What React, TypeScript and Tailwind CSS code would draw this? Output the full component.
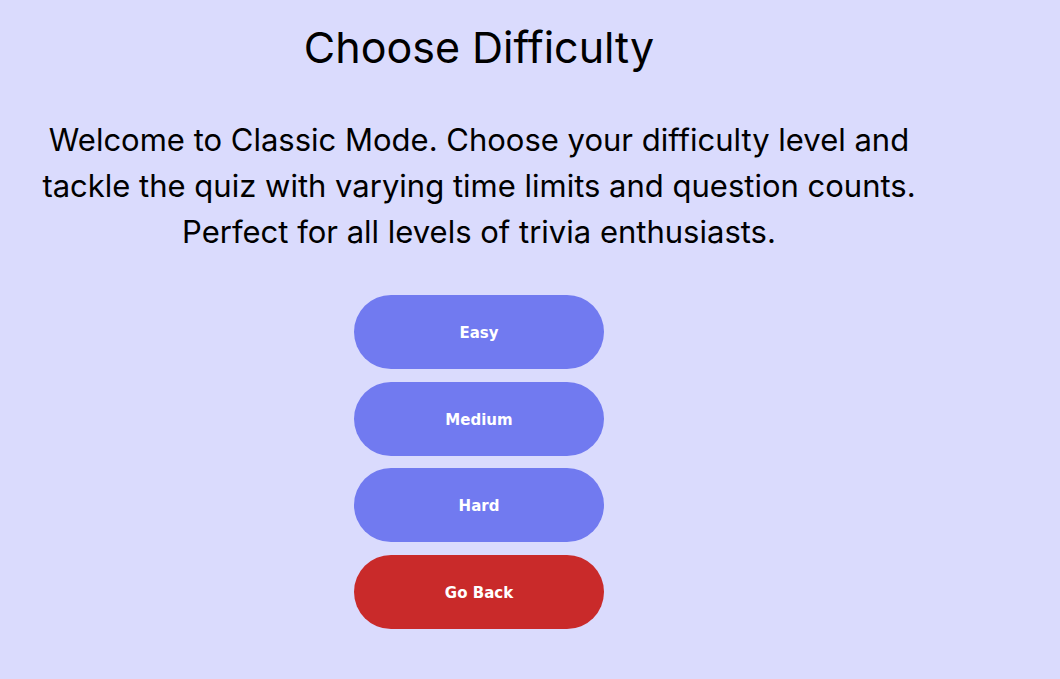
export default function App() {
    const levels = ["Easy", "Medium", "Hard"];

    return (
        <div className="min-h-[679px] w-full bg-[#dadbfd]">
            <div className="w-[958px] flex flex-col items-center pt-[21px]" style={{ fontFamily: "Inter, 'Open Sans', sans-serif" }}>
                {/* heading */}
                <h1 className="text-[43px] leading-[52px] font-normal text-black">Choose Difficulty</h1>

                {/* intro */}
                <p className="mt-[44px] text-center text-[31px] leading-[46px] text-black">
                    Welcome to Classic Mode. Choose your difficulty level and
                    <br />
                    tackle the quiz with varying time limits and question counts.
                    <br />
                    Perfect for all levels of trivia enthusiasts.
                </p>

                {/* buttons */}
                <div className="mt-[40px] flex flex-col gap-[12.5px]" style={{ fontFamily: "'DejaVu Sans', Verdana, sans-serif" }}>
                    {levels.map((level) => (
                        <button
                            key={level}
                            className="w-[250px] h-[74px] pt-[3px] rounded-full bg-[#717af0] text-white text-[15px] font-bold"
                        >
                            {level}
                        </button>
                    ))}
                    <button className="w-[250px] h-[74px] pt-[3px] rounded-full bg-[#c92a2a] text-white text-[15px] font-bold">
                        Go Back
                    </button>
                </div>
            </div>
        </div>
    );
}
